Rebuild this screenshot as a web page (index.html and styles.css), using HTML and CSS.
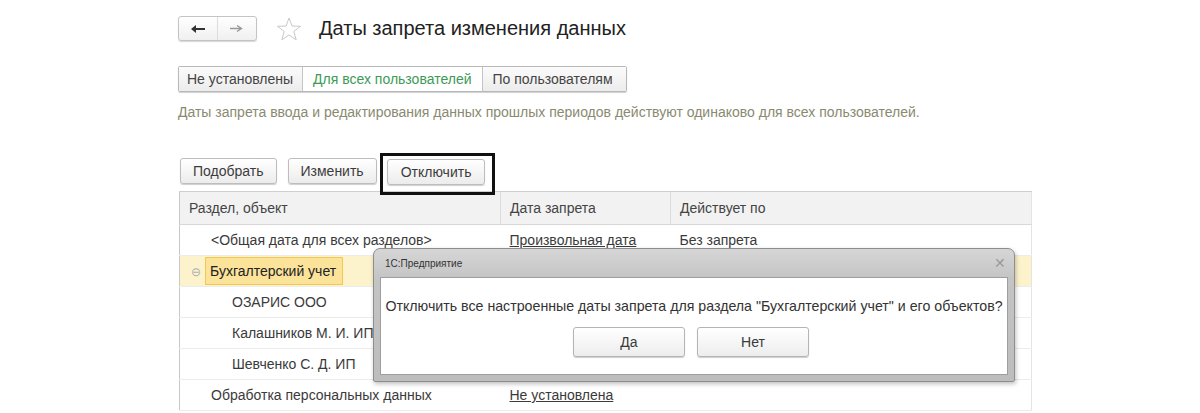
FILE: index.html
```html
<html>
    <head>
        <title>Даты запрета изменения данных</title>
        <link rel="stylesheet" href="styles.css">
    </head>
    <body>
        <div id="form">
            <div class="titleBar">
                <div class="navButtons">
                    <span class="navButton">
                        <svg width="16" height="10" viewBox="0 0 16 10"><path d="M1 5 L6 1 L6 4 L15 4 L15 6 L6 6 L6 9 Z" fill="#333"/></svg>
                    </span>
                    <span class="navButton">
                        <svg width="16" height="10" viewBox="0 0 16 10"><path d="M1 4.5 L12 4.5 M8 1.5 L12.5 4.5 L8 7.5" fill="none" stroke="#999" stroke-width="1.4"/></svg>
                    </span>
                </div>
                <svg class="star" width="26" height="26" viewBox="0 0 26 26"><path d="M13 2 L16 10 L24.5 10.3 L17.8 15.5 L20.2 23.8 L13 19 L5.8 23.8 L8.2 15.5 L1.5 10.3 L10 10 Z" fill="none" stroke="#c8c8c8" stroke-width="1"/></svg>
                <h1>Даты запрета изменения данных</h1>
            </div>

            <div class="tabs">
                <span class="tab">Не установлены</span>
                <span class="tab active">Для всех пользователей</span>
                <span class="tab last">По пользователям</span>
            </div>

            <p class="note">Даты запрета ввода и редактирования данных прошлых периодов действуют одинаково для всех пользователей.</p>

            <div class="commandBar">
                <span class="cmdButton">Подобрать</span>
                <span class="cmdButton">Изменить</span>
                <span class="frame"><span class="cmdButton">Отключить</span></span>
            </div>

            <table class="grid">
                <tr class="head">
                    <th class="c1">Раздел, объект</th>
                    <th class="c2">Дата запрета</th>
                    <th class="c3">Действует по</th>
                </tr>
                <tr>
                    <td class="lvl1">&lt;Общая дата для всех разделов&gt;</td>
                    <td><span class="link">Произвольная дата</span></td>
                    <td>Без запрета</td>
                </tr>
                <tr class="current">
                    <td class="group"><span class="collapse">&#8854;</span><span class="cell">Бухгалтерский учет</span></td>
                    <td></td>
                    <td></td>
                </tr>
                <tr>
                    <td class="lvl2">ОЗАРИС ООО</td>
                    <td></td>
                    <td></td>
                </tr>
                <tr>
                    <td class="lvl2">Калашников М. И. ИП</td>
                    <td></td>
                    <td></td>
                </tr>
                <tr>
                    <td class="lvl2">Шевченко С. Д. ИП</td>
                    <td></td>
                    <td></td>
                </tr>
                <tr>
                    <td class="lvl1">Обработка персональных данных</td>
                    <td><span class="link">Не установлена</span></td>
                    <td></td>
                </tr>
            </table>

            <!-- question box over the list -->
            <div class="dialog">
                <div class="dialogTitle">
                    <span>1С:Предприятие</span>
                    <span class="close">&#10005;</span>
                </div>
                <div class="dialogBody">
                    <p>Отключить все настроенные даты запрета для раздела "Бухгалтерский учет" и его объектов?</p>
                    <div class="dialogButtons">
                        <span class="dlgButton">Да</span>
                        <span class="dlgButton">Нет</span>
                    </div>
                </div>
            </div>
        </div>
    </body>
</html>
```

FILE: styles.css
```css
body{
    margin: 0;
    background: #ffffff;
    font-family: "Liberation Sans", Arial, sans-serif;
    font-size: 14px;
    color: #3a3a3a;
    height: 413px;
    overflow: hidden;
}
#form{
    position: relative;
    padding: 15px 0 0 178px;
}
.titleBar{
    display: flex;
    align-items: center;
    height: 27px;
}
.navButtons{
    display: flex;
    border: 1px solid #c4c4c4;
    border-radius: 3px;
    box-shadow: 0 1px 1px #d8d8d8;
    background: linear-gradient(#ffffff, #f0f0f0);
}
.navButton{
    width: 38px;
    height: 23px;
    display: flex;
    align-items: center;
    justify-content: center;
}
.navButton + .navButton{
    border-left: 1px solid #dcdcdc;
}
.star{
    margin-left: 19px;
}
h1{
    margin: 0 0 0 17px;
    font-size: 20px;
    font-weight: normal;
    color: #222;
}
.tabs{
    display: inline-flex;
    margin-top: 24px;
    border: 1px solid #b8b8b8;
    border-radius: 2px;
    box-shadow: 0 1px 1px #d0d0d0;
}
.tab{
    height: 24px;
    line-height: 24px;
    padding: 0 9px 0 8px;
    background: linear-gradient(#fbfbfb, #ececec);
    color: #444;
}
.tab + .tab{
    border-left: 1px solid #c4c4c4;
}
.tab.active{
    background: #ffffff;
    color: #3d9a56;
    padding: 0 10px 0 10px;
}
.tab.last{
    padding: 0 13px 0 10px;
}
.note{
    margin: 12px 0 0 0;
    color: #8a8a70;
}
.commandBar{
    display: flex;
    align-items: center;
    margin-top: 34px;
    height: 33px;
}
.cmdButton{
    display: inline-block;
    height: 24px;
    line-height: 24px;
    padding: 0 12px;
    border: 1px solid #bdbdbd;
    border-radius: 3px;
    background: linear-gradient(#ffffff, #ececec);
    box-shadow: 0 1px 1px #cfcfcf;
    color: #3c3c3c;
    margin-left: 2px;
    margin-right: 9px;
}
.frame{
    display: inline-block;
    border: 3px solid #111;
    padding: 3px 7px 7px 4px;
    margin: 0 0 0 -6px;
    position: relative;
    top: 3px;
}
.frame .cmdButton{
    margin: 0;
    padding: 0 13px;
}
.grid{
    border-collapse: collapse;
    width: 853px;
    font-size: 14px;
    margin: 4px 0 0 1px;
    border-left: 1px solid #c8c8c8;
    border-right: 1px solid #e4e4e4;
}
.grid th{
    background: #f2f2f2;
    font-weight: normal;
    text-align: left;
    height: 33px;
    padding: 0 0 0 9px;
    border-top: 1px solid #cfcfcf;
    border-bottom: 1px solid #d8d8d8;
    color: #444;
}
.grid th + th{
    border-left: 1px solid #dadada;
}
.c1{
    width: 311px;
}
.c2{
    width: 160px;
}
.grid td{
    height: 31px;
    padding: 0 0 0 9px;
    border-bottom: 1px solid #ececec;
    color: #3a3a3a;
}
.grid td.lvl1{
    padding-left: 31px;
}
.grid td.lvl2{
    padding-left: 52px;
}
.grid td.group{
    padding-left: 11px;
}
.current td{
    background: #fcf3cc;
}
.collapse{
    color: #b0b0b0;
    font-size: 12px;
    margin-right: 5px;
}
.cell{
    display: inline-block;
    border: 1px solid #f2c850;
    background: #fbe39a;
    padding: 5px 6px 5px 4px;
    margin-left: -1px;
    color: #222;
}
.link{
    text-decoration: underline;
    color: #3a3a3a;
}
.dialog{
    position: absolute;
    left: 373px;
    top: 248px;
    width: 628px;
    border: 1px solid #8e8e8e;
    border-radius: 7px 7px 2px 2px;
    background: linear-gradient(#d6d6d6, #c4c4c4 30px, #bdbdbd);
    padding: 0 6px 6px 6px;
    box-shadow: 1px 2px 4px rgba(0,0,0,0.25);
}
.dialogTitle{
    display: flex;
    justify-content: space-between;
    align-items: center;
    height: 28px;
    padding: 0 2px 0 5px;
    font-size: 10px;
    color: #333;
}
.close{
    font-size: 14px;
    color: #9a9a9a;
}
.dialogBody{
    background: #ffffff;
    border: 1px solid #9e9e9e;
    height: 96px;
}
.dialogBody p{
    margin: 20px 0 0 0;
    text-align: center;
    font-size: 14.2px;
    color: #333;
}
.dialogButtons{
    display: flex;
    justify-content: center;
    gap: 12px;
    margin-top: 13px;
    padding-right: 6px;
}
.dlgButton{
    width: 110px;
    height: 28px;
    line-height: 28px;
    text-align: center;
    border: 1px solid #b4b4b4;
    border-radius: 3px;
    background: linear-gradient(#ffffff, #ededed);
    box-shadow: 0 1px 1px #cfcfcf;
}
```
